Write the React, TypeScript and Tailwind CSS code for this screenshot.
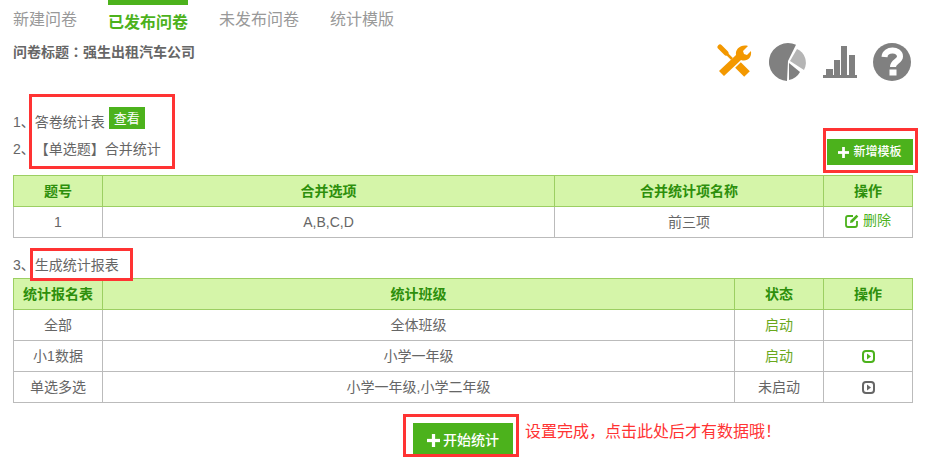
const tabs = ["新建问卷", "已发布问卷", "未发布问卷", "统计模版"];

function ToolsIcon() {
  return (
    <svg width="36" height="36" viewBox="0 0 36 36" fill="#f39800">
      <path d="M3 4 L9 10" stroke="#f39800" strokeWidth="5" strokeLinecap="round" />
      <path d="M9 10 L15 16" stroke="#f39800" strokeWidth="2.5" />
      <path d="M21 22 L30 31" stroke="#f39800" strokeWidth="8" />
      <path d="M2 28 L19 12 C18 6 24 1 31 3 L26 8 L27 11 L30 12 L34 8 C35 15 30 19 24 17 L7 33 Z" />
    </svg>
  );
}

function PieIcon() {
  return (
    <svg width="38" height="38" viewBox="0 0 38 38">
      <path d="M19 18 L27 1.8 A19 19 0 1 0 18 38 Z" fill="#808080" />
      <path d="M21 18 L28 6 A15 15 0 0 1 35 27 Z" fill="#b5b5b5" />
      <path d="M20 20 L31 29 A16 16 0 0 1 20 37 Z" fill="#808080" />
    </svg>
  );
}

function BarsIcon() {
  return (
    <svg width="34" height="32" viewBox="0 0 34 32" fill="#808080">
      <rect x="3" y="23" width="7" height="7" />
      <rect x="11" y="14" width="6" height="16" />
      <rect x="18" y="0" width="6" height="30" />
      <rect x="26" y="9" width="6" height="21" />
      <rect x="0" y="29" width="34" height="3" />
    </svg>
  );
}

function HelpIcon() {
  return (
    <svg width="38" height="38" viewBox="0 0 38 38">
      <circle cx="19" cy="19" r="19" fill="#808080" />
      <path d="M11.5 14 C12 5.5 27 5.5 27 13.5 C27 18.5 20 18.5 20 24" fill="none" stroke="#fff" strokeWidth="6" />
      <rect x="16.5" y="26.5" width="7" height="6" fill="#fff" />
    </svg>
  );
}

function PlayIcon({ color }: { color: string }) {
  return (
    <svg width="13" height="13" viewBox="0 0 13 13" className="inline-block align-middle">
      <rect x="1" y="1" width="11" height="11" rx="3" fill="none" stroke={color} strokeWidth="2" />
      <path d="M5 3.5 L9 6.5 L5 9.5 Z" fill={color} />
    </svg>
  );
}

function EditIcon() {
  return (
    <svg width="14" height="14" viewBox="0 0 14 14" className="inline-block align-middle">
      <path d="M8 2 H3 Q1 2 1 4 V11 Q1 13 3 13 H10 Q12 13 12 11 V7" fill="none" stroke="#4cb21c" strokeWidth="1.8" />
      <path d="M5 9 L5.5 6.5 L11.5 0.8 L13.3 2.6 L7.5 8.5 Z" fill="#4cb21c" />
    </svg>
  );
}

function PlusIcon({ size }: { size: number }) {
  return (
    <svg width={size} height={size} viewBox="0 0 12 12" fill="#fff">
      <rect x="0" y="4.5" width="12" height="3" />
      <rect x="4.5" y="0" width="3" height="12" />
    </svg>
  );
}

function RedBox({ className }: { className: string }) {
  return <div className={`absolute border-[3px] border-[#ff3333] ${className}`} />;
}

const th = "h-[31px] p-0 border border-[#9ccf62] text-center font-bold text-[#2d8f0c] text-[14px]";
const td = "h-[31px] p-0 border border-[#bbbbbb] text-center text-[14px] text-[#666666]";

export default function App() {
  return (
    <div className="relative w-[938px] h-[457px] overflow-hidden bg-white text-[#666666] text-[14px] font-['Liberation_Sans','Noto_Sans_CJK_SC',sans-serif]">
      <div className="flex gap-[31px] pl-[13px] h-[38px]">
        {tabs.map((t, i) => (
          <div
            key={t}
            className={
              i === 1
                ? "border-t-[5px] border-[#4cb21c] h-[38px] pt-[6px] text-[16px] leading-[24px] font-bold text-[#4cb21c]"
                : "pt-[8px] text-[16px] leading-[24px] text-[#999999]"
            }
          >
            {t}
          </div>
        ))}
      </div>

      <div className="flex justify-between pl-[13px] pr-[27px] h-[58px]">
        <div className="pt-[3px] text-[14px] leading-[20px] font-bold text-[#666666]">
          问卷标题<span className="font-['Noto_Sans_CJK_TC']">：</span>强生出租汽车公司
        </div>
        <div className="flex items-start gap-[16px] pt-[5px]">
          <ToolsIcon />
          <PieIcon />
          <div className="pt-[3px]"><BarsIcon /></div>
          <HelpIcon />
        </div>
      </div>

      <div className="flex justify-between pl-[13px] pr-[25px] h-[79px]">
        <div className="text-[14px]">
          <div className="flex items-start h-[36px] pt-[11px]">
            <span className="pt-[5px] leading-[20px]">1、答卷统计表</span>
            <span className="ml-[4px] w-[36px] h-[22px] bg-[#4cb21c] text-white text-[13px] leading-[23px] text-center">查看</span>
          </div>
          <div className="leading-[20px] pt-[7px]">
            2、<span className="ml-[7px]">【单选题】合并统计</span>
          </div>
        </div>
        <div className="pt-[43px]">
          <button className="flex items-center justify-center gap-[4px] w-[86px] h-[26px] bg-[#4cb21c] text-white text-[12px] font-medium">
            <PlusIcon size={11} />
            新增模板
          </button>
        </div>
      </div>

      <div className="px-[13px]">
        <table className="w-[900px] table-fixed border-collapse">
          <thead>
            <tr className="bg-[#d5f5a9]">
              <th className={`${th} w-[89px]`}>题号</th>
              <th className={`${th} w-[452px]`}>合并选项</th>
              <th className={`${th} w-[269px]`}>合并统计项名称</th>
              <th className={th}>操作</th>
            </tr>
          </thead>
          <tbody>
            <tr>
              <td className={td}>1</td>
              <td className={td}>A,B,C,D</td>
              <td className={td}>前三项</td>
              <td className={td}>
                <span className="inline-flex items-center gap-[4px] text-[#4cb21c]">
                  <EditIcon />
                  删除
                </span>
              </td>
            </tr>
          </tbody>
        </table>

        <div className="h-[40px] pt-[17px] text-[14px] leading-[20px]">3、生成统计报表</div>

        <table className="w-[900px] table-fixed border-collapse">
          <thead>
            <tr className="bg-[#d5f5a9]">
              <th className={`${th} w-[89px]`}>统计报名表</th>
              <th className={`${th} w-[632px]`}>统计班级</th>
              <th className={`${th} w-[89px]`}>状态</th>
              <th className={th}>操作</th>
            </tr>
          </thead>
          <tbody>
            <tr>
              <td className={td}>全部</td>
              <td className={td}>全体班级</td>
              <td className={`${td} !text-[#6aa81c]`}>启动</td>
              <td className={td}></td>
            </tr>
            <tr>
              <td className={td}>小1数据</td>
              <td className={td}>小学一年级</td>
              <td className={`${td} !text-[#6aa81c]`}>启动</td>
              <td className={td}><PlayIcon color="#4cb21c" /></td>
            </tr>
            <tr>
              <td className={td}>单选多选</td>
              <td className={td}>小学一年级,小学二年级</td>
              <td className={td}>未启动</td>
              <td className={td}><PlayIcon color="#666666" /></td>
            </tr>
          </tbody>
        </table>
      </div>

      <div className="flex pl-[413px] pt-[20px]">
        <button className="flex items-center justify-center gap-[3px] w-[100px] h-[34px] bg-[#4cb21c] text-white text-[14px] font-medium">
          <PlusIcon size={13} />
          开始统计
        </button>
        <span className="ml-[12px] text-[16px] leading-[17px] text-[#ff3333]">设置完成，点击此处后才有数据哦！</span>
      </div>

      <RedBox className="left-[29px] top-[94px] w-[146px] h-[75px]" />
      <RedBox className="left-[823px] top-[128px] w-[95px] h-[45px]" />
      <RedBox className="left-[30px] top-[248px] w-[103px] h-[33px]" />
      <RedBox className="left-[403px] top-[414px] w-[116px] h-[43px]" />
    </div>
  );
}
